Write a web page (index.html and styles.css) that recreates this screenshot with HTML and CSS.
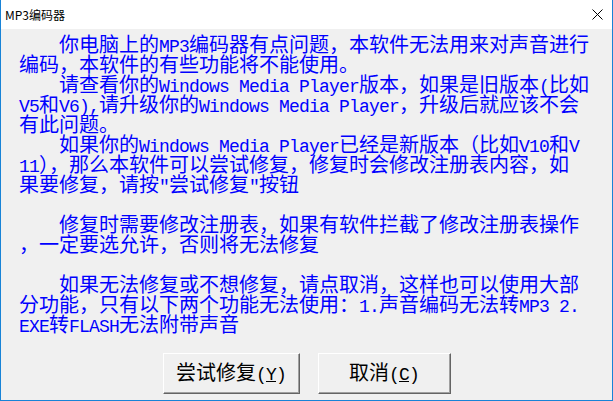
FILE: index.html
```html
<!DOCTYPE html>
<html lang="zh-CN">
<head>
    <meta charset="UTF-8">
    <meta name="viewport" content="width=device-width, initial-scale=1.0">
    <title>MP3编码器</title>
    <link rel="stylesheet" href="styles.css">
</head>
<body>
    <div class="window">
        <div class="titlebar">
            <span class="title">MP3编码器</span>
            <svg class="close" width="11" height="11" viewBox="0 0 11 11">
                <path d="M0.5 0.5 L10.5 10.5 M10.5 0.5 L0.5 10.5" stroke="#000" stroke-width="1" fill="none"/>
            </svg>
        </div>
        <div class="content">
            <div class="message">
                <div class="line indent">你电脑上的<span class="en">MP3</span>编码器有点问题，本软件无法用来对声音进行</div>
                <div class="line">编码，本软件的有些功能将不能使用。</div>
                <div class="line indent">请查看你的<span class="en">Windows Media Player</span>版本，如果是旧版本<span class="en">(</span>比如</div>
                <div class="line"><span class="en">V5</span>和<span class="en">V6),</span>请升级你的<span class="en">Windows Media Player</span>，升级后就应该不会</div>
                <div class="line">有此问题。</div>
                <div class="line indent">如果你的<span class="en">Windows Media Player</span>已经是新版本（比如<span class="en">V10</span>和<span class="en">V</span></div>
                <div class="line"><span class="en">11</span>），那么本软件可以尝试修复，修复时会修改注册表内容，如</div>
                <div class="line">果要修复，请按<span class="en">"</span>尝试修复<span class="en">"</span>按钮</div>
                <div class="line blank"></div>
                <div class="line indent">修复时需要修改注册表，如果有软件拦截了修改注册表操作</div>
                <div class="line">，一定要选允许，否则将无法修复</div>
                <div class="line blank"></div>
                <div class="line indent">如果无法修复或不想修复，请点取消，这样也可以使用大部</div>
                <div class="line">分功能，只有以下两个功能无法使用：<span class="en">1.</span>声音编码无法转<span class="en">MP3 2.</span></div>
                <div class="line"><span class="en">EXE</span>转<span class="en">FLASH</span>无法附带声音</div>
            </div>
            <div class="actions">
                <button type="button" class="button btn-retry">尝试修复<span class="en">(<u>Y</u>)</span></button>
                <button type="button" class="button btn-cancel">取消<span class="en">(<u>C</u>)</span></button>
            </div>
        </div>
    </div>
</body>
</html>
```

FILE: styles.css
```css
html, body {
    margin: 0;
    padding: 0;
}
body {
    width: 613px;
    height: 401px;
    overflow: hidden;
    font-family: "Noto Sans CJK SC", "Liberation Sans", sans-serif;
}
.window {
    box-sizing: border-box;
    width: 613px;
    height: 401px;
    border: 1px solid #1883d7;
    border-top: none;
    display: flex;
    flex-direction: column;
    background: #f0f0f0;
}
.titlebar {
    height: 29px;
    flex: none;
    background: #fff;
    display: flex;
    align-items: center;
}
.title {
    padding-left: 4px;
    font-size: 12px;
    color: #000;
}
.close {
    margin-left: auto;
    margin-right: 9px;
}
.content {
    flex: 1;
    display: flex;
    flex-direction: column;
}
.message {
    padding: 5px 0 0 18px;
    color: #0000ff;
    font-size: 20px;
}
.line {
    height: 20px;
    line-height: 20px;
    white-space: nowrap;
}
.line.indent {
    padding-left: 40px;
}
.en {
    font-family: "Liberation Mono", monospace;
    font-size: 18px;
    letter-spacing: -0.8px;
}
.actions {
    display: flex;
    justify-content: center;
    gap: 18px;
    padding-top: 19px;
}
.button {
    box-sizing: border-box;
    height: 41px;
    padding: 0;
    background: #f0f0f0;
    border: 1px solid;
    border-color: #fff #646464 #646464 #fff;
    box-shadow: inset -1px -1px 0 #a0a0a0;
    font-family: "Noto Sans CJK SC", sans-serif;
    font-size: 20px;
    color: #000;
    line-height: 20px;
}
.btn-retry {
    width: 137px;
}
.btn-cancel {
    width: 133px;
}
```
